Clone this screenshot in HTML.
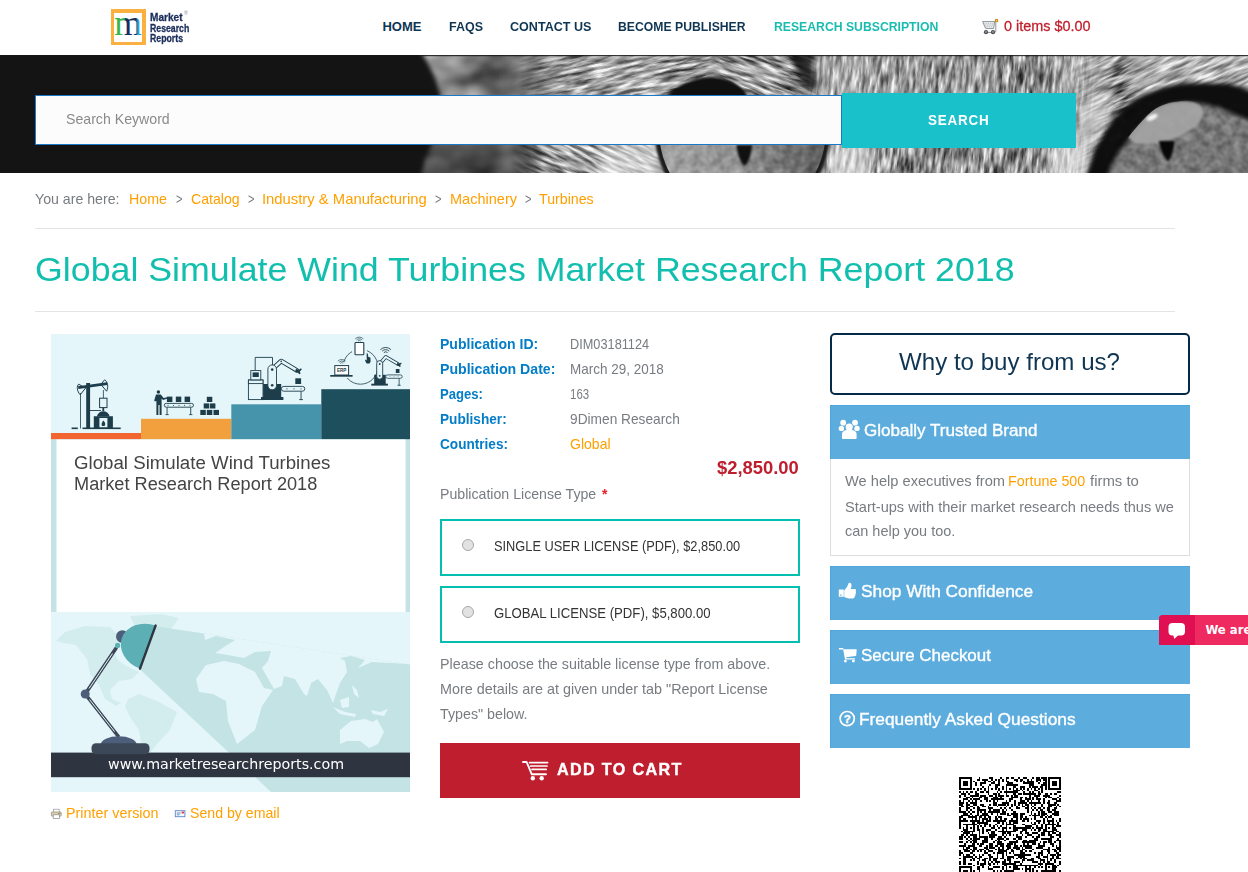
<!DOCTYPE html>
<html lang="en"><head><meta charset="utf-8"><title>Global Simulate Wind Turbines Market Research Report 2018</title>
<style>
html,body{margin:0;padding:0;background:#fff;}
body{width:1248px;height:872px;overflow:hidden;position:relative;font-family:"Liberation Sans",sans-serif;}
.t{position:absolute;white-space:nowrap;transform-origin:0 0;line-height:normal;display:block;margin:0;padding:0;text-decoration:none;font-style:normal;}
.abs{position:absolute;}
#banner{left:0;top:55px;width:1248px;height:118px;background:#141414;overflow:hidden;}
#sbox{left:35px;top:95px;width:805px;height:48px;background:#fcfcfc;border:1px solid #1a78c8;}
#sbtn{left:842px;top:93px;width:234px;height:55px;background:#19c2cb;}
.hr{left:35px;width:1140px;height:1px;background:#e4e4e4;}
.lic{left:440px;width:356px;height:53px;border:2px solid #02bfb0;background:#fff;}
.radio{width:10px;height:10px;border-radius:50%;border:1px solid #a9a9a9;background:#e2e2e2;}
#cart{left:440px;top:743px;width:360px;height:55px;background:#be1e2d;}
#why{left:830px;top:333px;width:356px;height:58px;border:2px solid #052a47;border-radius:5px;background:#fff;}
.ph{left:830px;width:360px;background:#5cacdd;box-shadow:inset 1px 1px 0 #4fa6dc;}
#pb{left:830px;top:459px;width:358px;height:96px;border:1px solid #ddd;border-top:none;background:#fff;}

</style></head><body>
<div class="abs" id="logo" style="left:111px;top:9px;width:35px;height:36px;background:#fbb040;"><div class="abs" style="left:3px;top:4px;width:28px;height:29px;background:#fff"></div></div>
<svg class="abs" id="bannersvg" style="left:0;top:55px" width="1248" height="118" viewBox="0 55 1248 118">
<defs>
<filter id="fBlur" x="0" y="0" width="1" height="1" color-interpolation-filters="sRGB">
  <feTurbulence type="fractalNoise" baseFrequency="0.03 0.045" numOctaves="2" seed="4"/>
  <feColorMatrix type="matrix" values="0.9 0 0 0 0.05  0.9 0 0 0 0.05  0.9 0 0 0 0.05  0 0 0 0 1"/>
</filter>
<filter id="fH" x="0" y="0" width="1" height="1" color-interpolation-filters="sRGB">
  <feTurbulence type="fractalNoise" baseFrequency="0.045 0.30" numOctaves="3" seed="7"/>
  <feColorMatrix type="matrix" values="2.1 0 0 0 -0.55  2.1 0 0 0 -0.55  2.1 0 0 0 -0.55  0 0 0 0 1"/>
</filter>
<filter id="fV" x="0" y="0" width="1" height="1" color-interpolation-filters="sRGB">
  <feTurbulence type="fractalNoise" baseFrequency="0.30 0.05" numOctaves="3" seed="11"/>
  <feColorMatrix type="matrix" values="1.7 0 0 0 -0.35  1.7 0 0 0 -0.35  1.7 0 0 0 -0.35  0 0 0 0 1"/>
</filter>
<filter id="fD" x="0" y="0" width="1" height="1" color-interpolation-filters="sRGB">
  <feTurbulence type="fractalNoise" baseFrequency="0.04 0.28" numOctaves="3" seed="21"/>
  <feColorMatrix type="matrix" values="2.0 0 0 0 -0.5  2.0 0 0 0 -0.5  2.0 0 0 0 -0.5  0 0 0 0 1"/>
</filter>
<filter id="fI" x="0" y="0" width="1" height="1" color-interpolation-filters="sRGB">
  <feTurbulence type="fractalNoise" baseFrequency="0.12 0.12" numOctaves="2" seed="5"/>
  <feColorMatrix type="matrix" values="1.2 0 0 0 -0.1  1.2 0 0 0 -0.1  1.2 0 0 0 -0.1  0 0 0 0 1"/>
</filter>
<filter id="b1" x="-0.2" y="-0.2" width="1.4" height="1.4" color-interpolation-filters="sRGB"><feGaussianBlur stdDeviation="1"/></filter>
<filter id="b2" x="-0.2" y="-0.2" width="1.4" height="1.4" color-interpolation-filters="sRGB"><feGaussianBlur stdDeviation="2"/></filter>
<filter id="b4" x="-0.3" y="-0.3" width="1.6" height="1.6" color-interpolation-filters="sRGB"><feGaussianBlur stdDeviation="4"/></filter>
<filter id="b7" x="-0.1" y="-0.3" width="1.2" height="1.6" color-interpolation-filters="sRGB"><feGaussianBlur stdDeviation="7"/></filter>
<linearGradient id="gm0" x1="0" x2="1"><stop offset="0" stop-color="#fff"/><stop offset="0.6" stop-color="#fff"/><stop offset="1" stop-color="#000"/></linearGradient>
<mask id="mB"><rect x="380" y="55" width="210" height="118" fill="url(#gm0)"/></mask>
<linearGradient id="gm1" x1="0" x2="1"><stop offset="0" stop-color="#000"/><stop offset="0.1" stop-color="#fff"/><stop offset="0.9" stop-color="#fff"/><stop offset="1" stop-color="#000"/></linearGradient>
<mask id="mH"><rect x="510" y="55" width="230" height="50" fill="url(#gm1h)"/></mask>
<mask id="mHb"><rect x="510" y="135" width="160" height="40" fill="url(#gm1h)"/></mask>
<mask id="mH2"><rect x="710" y="55" width="110" height="118" fill="url(#gm1)"/></mask>
<linearGradient id="gm1h" x1="0" x2="1"><stop offset="0" stop-color="#000"/><stop offset="0.28" stop-color="#fff"/><stop offset="0.87" stop-color="#fff"/><stop offset="1" stop-color="#000"/></linearGradient>
<mask id="mV"><rect x="800" y="55" width="310" height="118" fill="url(#gm1)"/></mask>
<linearGradient id="gm3" x1="0" x2="1"><stop offset="0" stop-color="#000"/><stop offset="0.2" stop-color="#fff"/><stop offset="1" stop-color="#fff"/></linearGradient>
<mask id="mD"><rect x="1070" y="55" width="178" height="118" fill="url(#gm3)"/></mask>
<clipPath id="cb"><rect x="0" y="55" width="1248" height="118"/></clipPath>
<clipPath id="cLow"><rect x="600" y="140" width="300" height="40"/></clipPath>
<clipPath id="cIrisR"><path d="M1103,184 C1107,168 1115,151 1126,140 C1134,130 1140,123 1145,118 C1154,108 1163,104 1173,102 C1192,98 1212,102 1227,109 C1236,113 1244,116 1256,121 L1256,184 Z"/></clipPath>
<clipPath id="cEyeL"><circle cx="742.5" cy="133" r="83"/></clipPath>
<linearGradient id="gIris" x1="0" x2="1"><stop offset="0" stop-color="#a2a2a2"/><stop offset="0.45" stop-color="#929292"/><stop offset="0.75" stop-color="#727272"/><stop offset="1" stop-color="#606060"/></linearGradient>
</defs>
<g clip-path="url(#cb)">
<rect x="0" y="55" width="1248" height="118" fill="#808080"/>
<g filter="url(#b7)">
<rect x="400" y="40" width="60" height="60" fill="#8f8f8f"/>
<rect x="460" y="40" width="30" height="60" fill="#808080"/>
<rect x="490" y="40" width="30" height="60" fill="#5e5e5e"/>
<rect x="520" y="40" width="25" height="60" fill="#737373"/>
<rect x="545" y="40" width="55" height="60" fill="#999999"/>
<rect x="600" y="40" width="65" height="60" fill="#a8a8a8"/>
<rect x="665" y="40" width="85" height="60" fill="#8c8c8c"/>
<rect x="750" y="40" width="42" height="60" fill="#999999"/>
<rect x="792" y="40" width="21" height="60" fill="#4c4c4c"/>
<rect x="813" y="40" width="57" height="60" fill="#adadad"/>
<rect x="870" y="40" width="130" height="60" fill="#999999"/>
<rect x="1000" y="40" width="50" height="60" fill="#878787"/>
<rect x="1050" y="40" width="62" height="60" fill="#a8a8a8"/>
<rect x="1112" y="40" width="14" height="60" fill="#6b6b6b"/>
<rect x="1126" y="40" width="134" height="60" fill="#b2b2b2"/>
<rect x="400" y="100" width="145" height="40" fill="#666666"/>
<rect x="545" y="100" width="531" height="40" fill="#999999"/>
<rect x="1076" y="100" width="36" height="40" fill="#c7c7c7"/>
<rect x="1112" y="100" width="148" height="40" fill="#808080"/>
<rect x="400" y="140" width="140" height="50" fill="#4c4c4c"/>
<rect x="540" y="140" width="60" height="50" fill="#a3a3a3"/>
<rect x="600" y="140" width="60" height="50" fill="#d1d1d1"/>
<rect x="660" y="140" width="169" height="50" fill="#8c8c8c"/>
<rect x="829" y="140" width="43" height="50" fill="#d1d1d1"/>
<rect x="872" y="140" width="178" height="50" fill="#8f8f8f"/>
<rect x="1050" y="140" width="42" height="50" fill="#d4d4d4"/>
<rect x="1092" y="140" width="168" height="50" fill="#737373"/>
</g>
<!-- texture overlays -->
<g style="mix-blend-mode:overlay" opacity="0.9">
 <g mask="url(#mB)"><rect x="380" y="55" width="200" height="118" filter="url(#fBlur)"/></g>
 <g mask="url(#mH)"><g transform="rotate(-13 620 110)"><rect x="470" y="0" width="300" height="230" filter="url(#fH)"/></g></g>
 <g mask="url(#mHb)"><g transform="rotate(24 600 160)"><rect x="440" y="40" width="320" height="240" filter="url(#fH)"/></g></g>
 <g mask="url(#mH2)"><g transform="rotate(20 770 80)"><rect x="660" y="-20" width="240" height="240" filter="url(#fH)"/></g></g>
 <g mask="url(#mV)"><g transform="rotate(5 950 110)"><rect x="770" y="20" width="380" height="200" filter="url(#fV)"/></g></g>
 <g mask="url(#mD)"><g transform="rotate(-26 1150 110)"><rect x="980" y="-40" width="380" height="320" filter="url(#fD)"/></g></g>
</g>
<!-- left eye -->
<g>
 <path d="M648,104 C672,76 720,64 770,78 C790,84 805,94 812,102 L812,96 C800,84 785,74 768,70 C720,58 672,70 648,98 Z" fill="#dcdcdc" opacity="0.4" filter="url(#b2)"/>
 <g clip-path="url(#cLow)">
  <circle cx="742.5" cy="133" r="87.5" fill="#1c1c1c" filter="url(#b1)"/>
  <circle cx="742.5" cy="133" r="83" fill="url(#gIris)"/>
  <g clip-path="url(#cEyeL)" style="mix-blend-mode:overlay" opacity="0.3"><rect x="655" y="140" width="180" height="40" filter="url(#fI)"/></g>
 </g>
 <path d="M664,100 C672,88 690,78 710,77.5 C728,77.5 742,84 750,100 Z" fill="#101010" filter="url(#b1)"/>
 <path d="M736.5,145 L752,145 C751.5,155 748.5,162 744.5,166 C740.5,162 737,154 736.5,145 Z" fill="#0a0a0a" filter="url(#b1)" opacity="0.95"/>
 <path d="M792,50 C794,66 800,80 812,90 L818,84 C812,76 810,62 812,50 Z" fill="#1e1e1e" opacity="0.8" filter="url(#b2)"/>
</g>
<!-- right eye -->
<g>
 <path d="M1084,184 C1088,168 1093,154 1100,141 C1104,132 1108,126 1113,119 C1118,112 1124,107 1130,103 C1137,98 1144,94.5 1152,91.5 C1160,88.5 1166,86.5 1173,85 C1181,83.5 1188,83 1195,83 C1206,82.5 1217,82.5 1227,83.5 C1236,85 1243,88 1256,93 L1256,184 Z" fill="#0e0e0e" filter="url(#b2)"/>
 <path id="irisR" d="M1105,184 C1109,168 1117,152 1128,141 C1136,131 1142,124 1147,119 C1156,110 1164,106 1173,104 C1192,100 1212,104 1227,111 C1236,115 1244,118 1256,123 L1256,184 Z" fill="#767676" filter="url(#b2)"/>
 <g style="mix-blend-mode:overlay" opacity="0.3"><path d="M1105,184 C1109,168 1117,152 1128,141 C1136,131 1142,124 1147,119 C1156,110 1164,106 1173,104 C1192,100 1212,104 1227,111 C1236,115 1244,118 1256,123 L1256,184 Z" filter="url(#fI)"/></g>
 <g clip-path="url(#cIrisR)"><ellipse cx="1165" cy="122.5" rx="40" ry="18" fill="#a6a6a6" transform="rotate(-19 1165 122.5)" filter="url(#b1)" opacity="0.9"/></g>
 <ellipse cx="1152" cy="117.3" rx="6" ry="2.6" fill="#f4f4f4" transform="rotate(-25 1152 117.3)" filter="url(#b1)"/>
 <path d="M1159,141 L1174.5,141 C1174,150 1171,158 1168,161.5 C1163,156 1160,149 1159,141 Z" fill="#080808" filter="url(#b1)"/>
</g>
<!-- left darkness with curved cheek edge -->
<path d="M-20,35 H412 L423,55 C432,70 439,85 441,100 C442,120 436,140 425,158 L422,173 L418,195 H-20 Z" fill="#141414" filter="url(#b2)"/>
<rect x="0" y="55" width="400" height="118" fill="#141414"/>
<rect x="420" y="55" width="828" height="1.2" fill="#181818" opacity="0.85"/>
</g>
</svg>

<div class="abs" id="sbox"></div>
<div class="abs" id="sbtn"></div>
<div class="abs hr" style="top:228px"></div>
<div class="abs hr" style="top:311px"></div>
<svg class="abs" id="cover" style="left:51px;top:334px" width="359" height="458" viewBox="51 334 359 458">
<defs>
<clipPath id="beamclip"><polygon points="154,626 410,664.5 410,792 271,792 139.5,669"/></clipPath>
</defs>
<rect x="51" y="334" width="359" height="458" fill="#e5f6fa"/>
<!-- colour steps -->
<rect x="51" y="433" width="90" height="6.5" fill="#f26531"/>
<rect x="141" y="418.8" width="90.3" height="20.7" fill="#f29f3e"/>
<rect x="231.3" y="404.3" width="90" height="35.2" fill="#4693ac"/>
<rect x="321.3" y="389.2" width="88.7" height="50.3" fill="#1e4f5c"/>
<!-- white title panel -->
<rect x="51" y="439.5" width="359" height="172.5" fill="#c5e3e6"/>
<rect x="56.5" y="439.5" width="349" height="172.5" fill="#ffffff"/>
<!-- world map -->
<g fill="#d3edef">
<path d="M56,641 L65,632 L85,626 L110,627 L121,638 L112,650 L119,661 L128,667 L139,672 L132,679 L119,681 L110,690 L112,699 L121,703 L116,706 L105,699 L99,685 L90,674 L87,659 L76,645 L63,643 Z"/>
<path d="M128,699 L139,694 L157,701 L177,712 L170,730 L157,744 L150,753 L143,753 L139,730 L130,717 L125,706 Z"/>
<path d="M130,616 L161,614 L179,618 L170,630 L157,638 L148,632 L134,625 Z"/>
</g>
<polygon points="154,626 410,664.5 410,792 271,792 139.5,669" fill="#c3e3e4"/>
<g fill="#e5f6fa" clip-path="url(#beamclip)">
<!-- Africa -->
<path d="M196,679 L206,665 L224,661 L239,664 L255,672 L264,688 L273,690 L262,706 L255,730 L237,744 L228,721 L226,701 L213,694 L199,692 Z"/>
<!-- Eurasia -->
<path d="M205,640 L216,636 L235,640 L224,647 L215,653 L228,655 L244,658 L255,652 L271,651 L268,661 L262,668 L266,675 L274,689 L282,686 L284,676 L295,679 L304,694 L307,696 L311,683 L318,679 L327,690 L333,703 L336,694 L340,683 L347,672 L345,661 L340,658 L351,656 L365,660 L358,668 L372,662 L410,664 L410,600 L200,600 Z"/>
<!-- SE Asia islands -->
<path d="M333,707 L345,712 L356,714 L355,717 L340,714 Z"/>
<path d="M340,700 L349,697 L349,707 L342,708 Z"/>
<path d="M352,685 L357,690 L359,698 L354,694 Z"/>
<path d="M371,710 L380,712 L388,709 L384,716 L373,714 Z"/>
<!-- Australia -->
<path d="M340,730 L351,721 L365,719 L373,722 L377,719 L384,732 L378,744 L369,748 L360,741 L347,741 L340,744 Z"/>
</g>
<!-- dark footer band -->
<rect x="51" y="752.6" width="359" height="24.6" fill="#2e3440"/>
<!-- lamp -->
<g>
<path d="M116.5,647.5 L85.2,694 L118.8,737" fill="none" stroke="#3c4858" stroke-width="3.6" stroke-linejoin="round"/>
<path d="M112.5,653.5 L89,688.5 M89.5,699.5 L114.5,731.5" fill="none" stroke="#e5f6fa" stroke-width="1"/>
<circle cx="85.2" cy="694" r="4.5" fill="#4d5e7b"/>
<circle cx="122.3" cy="636.5" r="6.3" fill="#4d5e7b"/>
<circle cx="117.6" cy="645.4" r="2.6" fill="#5cb0b5"/>
<path d="M155.6,625.6 A22.9,27.5 109.9 0 0 140,668.7 Z" fill="#5cb0b5"/>
<path d="M155.6,625.6 L140,668.7" stroke="#2e3440" stroke-width="2.4" stroke-linecap="round"/>
<ellipse cx="118.7" cy="744.5" rx="18" ry="8.3" fill="#4d5e7b"/>
<rect x="91.5" y="743.3" width="58" height="11" rx="4.5" fill="#3c4858"/>
</g>
<!-- industrial icons -->
<g fill="#1e3d4a" stroke="none">
<!-- pumpjack -->
<rect x="86.2" y="383" width="3.9" height="45.6"/>
<rect x="82.5" y="427.5" width="38.2" height="1.6"/>
<rect x="71.6" y="427.5" width="6.2" height="1.6"/>
<rect x="80" y="393" width="0.8" height="35.5"/>
<path d="M78,386.2 L107,382.2 L107.4,385 L78.4,389 Z"/>
<path d="M78.6,384.2 C76.6,386 76.8,391 80.2,394.8 L85.6,388 Z" fill="none" stroke="#1e3d4a" stroke-width="1"/>
<path d="M104.6,379.8 C107.8,381.6 108.6,387 106.6,391.2 L100.8,384.4 Z" fill="none" stroke="#1e3d4a" stroke-width="1"/>
<rect x="102.9" y="390" width="0.8" height="8.2"/>
<rect x="99.6" y="398.2" width="7.4" height="9.4" fill="#e5f6fa" stroke="#1e3d4a" stroke-width="1"/>
<rect x="102.4" y="407.6" width="1.8" height="3.5"/>
<rect x="90" y="410.1" width="11" height="0.9"/>
<path d="M96.8,416.6 C98.5,409.5 108,409.5 109.7,416.6 Z"/>
<path d="M93.8,416.2 H112.9 V428 H93.8 Z M99.4,418 V427.6 H107.4 V418 Z" fill-rule="evenodd"/>
<path d="M103.4,420.4 C105.4,422.4 105.8,424.4 104.6,426 H102.2 C101,424.6 101.6,422.6 103.4,420.4 Z"/>
<!-- worker -->
<circle cx="158.4" cy="391.9" r="1.75"/>
<path d="M156,394.4 H160.8 L163.6,398 L167.4,397.2 L167.8,398.6 L163,400 L161.6,398.6 V415 H159.6 V405 H158.4 V415 H156.4 V401 L155,401.4 L154.2,400.6 Z"/>
<rect x="166.9" y="396.6" width="5.5" height="5.4"/><rect x="175.8" y="396.6" width="5.5" height="5.4"/><rect x="184.6" y="396.6" width="5.5" height="5.4"/>
<rect x="164.3" y="403.4" width="29.2" height="3.8" rx="1.9" fill="#e5f6fa" stroke="#1e3d4a" stroke-width="0.9"/>
<circle cx="168" cy="405.3" r="0.55"/><circle cx="173.5" cy="405.3" r="0.55"/><circle cx="179" cy="405.3" r="0.55"/><circle cx="184.5" cy="405.3" r="0.55"/><circle cx="190" cy="405.3" r="0.55"/>
<rect x="166.6" y="407.4" width="0.9" height="7.6"/><rect x="190.3" y="407.4" width="0.9" height="7.6"/>
<rect x="165.4" y="414.3" width="3.3" height="0.8"/><rect x="189.1" y="414.3" width="3.3" height="0.8"/>
<!-- box pyramid -->
<rect x="206.8" y="396.8" width="5.5" height="5.2"/>
<rect x="203.7" y="403.4" width="5.5" height="5.1"/><rect x="209.9" y="403.4" width="5.5" height="5.1"/>
<rect x="200.3" y="409.9" width="5.5" height="5.1"/><rect x="206.8" y="409.9" width="5.5" height="5.1"/><rect x="213.5" y="409.9" width="5.5" height="5.1"/>
</g>
<!-- robot cell on blue step -->
<g fill="#1e3d4a">
<path d="M255.2,370.4 V357.4 H272.5 V366" fill="none" stroke="#1e3d4a" stroke-width="0.9"/>
<rect x="248.4" y="380" width="14.6" height="19.6" fill="#e5f6fa" stroke="#1e3d4a" stroke-width="0.9"/>
<rect x="248.4" y="380" width="14.6" height="3.6" fill="#e5f6fa" stroke="#1e3d4a" stroke-width="0.9"/>
<rect x="250.8" y="370.6" width="10" height="9.3" fill="#e5f6fa" stroke="#1e3d4a" stroke-width="0.9"/>
<rect x="252.6" y="372.4" width="6.2" height="4.6"/>
<rect x="263.1" y="384" width="18.1" height="14"/>
<rect x="261" y="397" width="22.4" height="3"/>
<path d="M272.2,369.2 L281.2,361 L297,370.4" fill="none" stroke="#1e3d4a" stroke-width="4.6" stroke-linecap="round" stroke-linejoin="round"/>
<path d="M272.2,369.2 L281.2,361 L297,370.4" fill="none" stroke="#e5f6fa" stroke-width="2.8" stroke-linecap="round" stroke-linejoin="round"/>
<rect x="267.9" y="364.9" width="8.6" height="24.9" rx="4.3" fill="#e5f6fa" stroke="#1e3d4a" stroke-width="0.9"/>
<circle cx="272.2" cy="369.6" r="1.3"/><circle cx="272.2" cy="385.2" r="1.3"/><circle cx="281.2" cy="361.4" r="0.8"/>
<path d="M296,368.4 L298.6,370 L301,368.2 L301.8,369.4 L299.8,371.4 L300.6,373.6 L299.2,374.2 L297.6,372.2 L295,372 Z"/>
<rect x="295.3" y="378.3" width="5.8" height="5.7"/>
<rect x="281.4" y="386.4" width="23.4" height="4.8" rx="2.4" fill="#e5f6fa" stroke="#1e3d4a" stroke-width="0.9"/>
<circle cx="287" cy="388.8" r="0.6"/><circle cx="294" cy="388.8" r="0.6"/><circle cx="301" cy="388.8" r="0.6"/>
<rect x="300.6" y="391.4" width="0.9" height="8.6"/><rect x="299.2" y="399.2" width="3.7" height="0.9"/>
</g>
<!-- IoT cell on dark step -->
<g fill="#1e3d4a">
<circle cx="360.5" cy="366.8" r="17.4" fill="none" stroke="#1e3d4a" stroke-width="0.8"/>
<rect x="352" y="340" width="15" height="16" fill="#e5f6fa" stroke="none"/>
<rect x="355" y="342.5" width="8.8" height="12.2" rx="0.8" fill="#ffffff" stroke="#1e3d4a" stroke-width="1.1"/>
<g transform="translate(359.3 340.8) scale(0.75)"><g fill="none" stroke="#1e3d4a" stroke-width="0.9" stroke-linecap="round"><path d="M-1.6,0 A2.2,2.2 0 0 1 1.6,0"/><path d="M-3.3,-1.5 A4.6,4.6 0 0 1 3.3,-1.5"/><path d="M-5,-3 A7,7 0 0 1 5,-3"/></g></g>
<path d="M366.6,353.4 L367.6,353.2 L368.4,357 L370.4,357.4 L370.6,361.6 L369.6,363.4 H366.6 L365,360.6 L365.6,359.6 L366.8,360.4 Z"/>
<rect x="331" y="362" width="21" height="16" fill="#e5f6fa" stroke="none"/>
<rect x="334.8" y="365.6" width="13.8" height="9.4" fill="#ffffff" stroke="#1e3d4a" stroke-width="1"/>
<rect x="330.2" y="375" width="22.4" height="1.7"/>
<text x="341.7" y="372.4" font-family="'Liberation Sans',sans-serif" font-size="4.6" font-weight="700" text-anchor="middle" fill="#1e3d4a">ERP</text>
<g transform="translate(341.7 363) scale(0.72)"><g fill="none" stroke="#1e3d4a" stroke-width="0.9" stroke-linecap="round"><path d="M-1.6,0 A2.2,2.2 0 0 1 1.6,0"/><path d="M-3.3,-1.5 A4.6,4.6 0 0 1 3.3,-1.5"/><path d="M-5,-3 A7,7 0 0 1 5,-3"/></g></g>
<rect x="370" y="356" width="34" height="30" fill="#e5f6fa" stroke="none" opacity="0"/>
<rect x="374.2" y="374.8" width="11.5" height="9.4"/>
<rect x="371.3" y="383.7" width="16.6" height="1.9"/>
<path d="M379.7,364 L385.7,356.8 L398,364" fill="none" stroke="#1e3d4a" stroke-width="3.6" stroke-linecap="round" stroke-linejoin="round"/>
<path d="M379.7,364 L385.7,356.8 L398,364" fill="none" stroke="#e5f6fa" stroke-width="2" stroke-linecap="round" stroke-linejoin="round"/>
<rect x="376.7" y="360.6" width="6" height="18.6" rx="3" fill="#e5f6fa" stroke="#1e3d4a" stroke-width="0.9"/>
<circle cx="379.7" cy="364" r="0.9"/><circle cx="379.7" cy="375.8" r="0.9"/>
<path d="M397.4,362.4 L399.4,363.8 L401,362.6 L401.6,363.6 L400.2,365 L400.8,366.6 L399.6,367 L398.4,365.6 L396.6,365.4 Z"/>
<rect x="395.8" y="369" width="3.7" height="4"/>
<rect x="385.8" y="374.9" width="16.4" height="3.4" rx="1.7" fill="#e5f6fa" stroke="#1e3d4a" stroke-width="0.8"/>
<circle cx="390" cy="376.6" r="0.45"/><circle cx="394" cy="376.6" r="0.45"/><circle cx="398" cy="376.6" r="0.45"/>
<rect x="398.7" y="378.4" width="0.8" height="7.2"/><rect x="397.5" y="384.8" width="3.2" height="0.8"/>
<g transform="translate(385.7 352.4) scale(1.0)"><g fill="none" stroke="#1e3d4a" stroke-width="0.9" stroke-linecap="round"><path d="M-1.6,0 A2.2,2.2 0 0 1 1.6,0"/><path d="M-3.3,-1.5 A4.6,4.6 0 0 1 3.3,-1.5"/><path d="M-5,-3 A7,7 0 0 1 5,-3"/></g></g>
</g>
</svg>

<div class="abs lic" style="top:519px"><div class="abs radio" style="left:20px;top:18px"></div></div>
<div class="abs lic" style="top:586px"><div class="abs radio" style="left:20px;top:18px"></div></div>
<div class="abs" id="cart"></div>
<div class="abs" id="why"></div>
<div class="abs ph" style="top:405px;height:54px"></div>
<div class="abs" id="pb"></div>
<div class="abs ph" style="top:566px;height:54px"></div>
<div class="abs ph" style="top:630px;height:54px"></div>
<div class="abs ph" style="top:694px;height:54px"></div>
<div class="abs" id="chat" style="left:1159px;top:615px;width:89px;height:30px;background:#ee2a60;border-radius:4px 0 0 0;"><div class="abs" style="left:0;top:0;width:36px;height:30px;background:#e00f52;border-radius:4px 0 0 0"></div></div>
<svg class="abs" id="qr" style="left:958.9px;top:776.6px" width="102.0" height="102.0" viewBox="0 0 102.0 102.0" shape-rendering="crispEdges"><rect width="102.0" height="102.0" fill="#fff"/><path fill="#000" d="M0.00,0.00h12.53v1.79h-12.53zM19.68,0.00h1.79v1.79h-1.79zM30.42,0.00h3.58v1.79h-3.58zM41.16,0.00h1.79v1.79h-1.79zM46.53,0.00h3.58v1.79h-3.58zM51.89,0.00h3.58v1.79h-3.58zM59.05,0.00h1.79v1.79h-1.79zM64.42,0.00h3.58v1.79h-3.58zM73.37,0.00h1.79v1.79h-1.79zM76.95,0.00h3.58v1.79h-3.58zM82.32,0.00h5.37v1.79h-5.37zM89.47,0.00h12.53v1.79h-12.53zM0.00,1.79h1.79v1.79h-1.79zM10.74,1.79h1.79v1.79h-1.79zM17.89,1.79h3.58v1.79h-3.58zM23.26,1.79h5.37v1.79h-5.37zM32.21,1.79h1.79v1.79h-1.79zM35.79,1.79h1.79v1.79h-1.79zM39.37,1.79h1.79v1.79h-1.79zM42.95,1.79h1.79v1.79h-1.79zM46.53,1.79h1.79v1.79h-1.79zM55.47,1.79h3.58v1.79h-3.58zM60.84,1.79h3.58v1.79h-3.58zM68.00,1.79h1.79v1.79h-1.79zM71.58,1.79h1.79v1.79h-1.79zM76.95,1.79h5.37v1.79h-5.37zM84.11,1.79h3.58v1.79h-3.58zM89.47,1.79h1.79v1.79h-1.79zM100.21,1.79h1.79v1.79h-1.79zM0.00,3.58h1.79v1.79h-1.79zM3.58,3.58h5.37v1.79h-5.37zM10.74,3.58h1.79v1.79h-1.79zM14.32,3.58h1.79v1.79h-1.79zM25.05,3.58h1.79v1.79h-1.79zM28.63,3.58h3.58v1.79h-3.58zM34.00,3.58h1.79v1.79h-1.79zM39.37,3.58h1.79v1.79h-1.79zM42.95,3.58h1.79v1.79h-1.79zM46.53,3.58h3.58v1.79h-3.58zM57.26,3.58h1.79v1.79h-1.79zM60.84,3.58h1.79v1.79h-1.79zM64.42,3.58h1.79v1.79h-1.79zM68.00,3.58h7.16v1.79h-7.16zM76.95,3.58h1.79v1.79h-1.79zM80.53,3.58h1.79v1.79h-1.79zM85.89,3.58h1.79v1.79h-1.79zM89.47,3.58h1.79v1.79h-1.79zM93.05,3.58h5.37v1.79h-5.37zM100.21,3.58h1.79v1.79h-1.79zM0.00,5.37h1.79v1.79h-1.79zM3.58,5.37h5.37v1.79h-5.37zM10.74,5.37h1.79v1.79h-1.79zM16.11,5.37h1.79v1.79h-1.79zM21.47,5.37h5.37v1.79h-5.37zM32.21,5.37h3.58v1.79h-3.58zM39.37,5.37h1.79v1.79h-1.79zM48.32,5.37h5.37v1.79h-5.37zM64.42,5.37h10.74v1.79h-10.74zM78.74,5.37h1.79v1.79h-1.79zM84.11,5.37h3.58v1.79h-3.58zM89.47,5.37h1.79v1.79h-1.79zM93.05,5.37h5.37v1.79h-5.37zM100.21,5.37h1.79v1.79h-1.79zM0.00,7.16h1.79v1.79h-1.79zM3.58,7.16h5.37v1.79h-5.37zM10.74,7.16h1.79v1.79h-1.79zM16.11,7.16h1.79v1.79h-1.79zM21.47,7.16h1.79v1.79h-1.79zM30.42,7.16h1.79v1.79h-1.79zM35.79,7.16h5.37v1.79h-5.37zM46.53,7.16h12.53v1.79h-12.53zM69.79,7.16h5.37v1.79h-5.37zM82.32,7.16h5.37v1.79h-5.37zM89.47,7.16h1.79v1.79h-1.79zM93.05,7.16h5.37v1.79h-5.37zM100.21,7.16h1.79v1.79h-1.79zM0.00,8.95h1.79v1.79h-1.79zM10.74,8.95h1.79v1.79h-1.79zM23.26,8.95h1.79v1.79h-1.79zM28.63,8.95h1.79v1.79h-1.79zM35.79,8.95h3.58v1.79h-3.58zM42.95,8.95h1.79v1.79h-1.79zM46.53,8.95h1.79v1.79h-1.79zM53.68,8.95h3.58v1.79h-3.58zM60.84,8.95h5.37v1.79h-5.37zM69.79,8.95h1.79v1.79h-1.79zM73.37,8.95h5.37v1.79h-5.37zM80.53,8.95h3.58v1.79h-3.58zM85.89,8.95h1.79v1.79h-1.79zM89.47,8.95h1.79v1.79h-1.79zM100.21,8.95h1.79v1.79h-1.79zM0.00,10.74h12.53v1.79h-12.53zM14.32,10.74h1.79v1.79h-1.79zM17.89,10.74h1.79v1.79h-1.79zM21.47,10.74h1.79v1.79h-1.79zM25.05,10.74h1.79v1.79h-1.79zM28.63,10.74h1.79v1.79h-1.79zM32.21,10.74h1.79v1.79h-1.79zM35.79,10.74h1.79v1.79h-1.79zM39.37,10.74h1.79v1.79h-1.79zM42.95,10.74h1.79v1.79h-1.79zM46.53,10.74h1.79v1.79h-1.79zM50.11,10.74h1.79v1.79h-1.79zM53.68,10.74h1.79v1.79h-1.79zM57.26,10.74h1.79v1.79h-1.79zM60.84,10.74h1.79v1.79h-1.79zM64.42,10.74h1.79v1.79h-1.79zM68.00,10.74h1.79v1.79h-1.79zM71.58,10.74h1.79v1.79h-1.79zM75.16,10.74h1.79v1.79h-1.79zM78.74,10.74h1.79v1.79h-1.79zM82.32,10.74h1.79v1.79h-1.79zM85.89,10.74h1.79v1.79h-1.79zM89.47,10.74h12.53v1.79h-12.53zM17.89,12.53h1.79v1.79h-1.79zM25.05,12.53h1.79v1.79h-1.79zM28.63,12.53h1.79v1.79h-1.79zM39.37,12.53h1.79v1.79h-1.79zM46.53,12.53h1.79v1.79h-1.79zM53.68,12.53h7.16v1.79h-7.16zM62.63,12.53h1.79v1.79h-1.79zM68.00,12.53h1.79v1.79h-1.79zM75.16,12.53h3.58v1.79h-3.58zM82.32,12.53h1.79v1.79h-1.79zM0.00,14.32h1.79v1.79h-1.79zM3.58,14.32h1.79v1.79h-1.79zM7.16,14.32h1.79v1.79h-1.79zM10.74,14.32h3.58v1.79h-3.58zM16.11,14.32h1.79v1.79h-1.79zM21.47,14.32h3.58v1.79h-3.58zM26.84,14.32h3.58v1.79h-3.58zM37.58,14.32h1.79v1.79h-1.79zM41.16,14.32h1.79v1.79h-1.79zM44.74,14.32h14.32v1.79h-14.32zM64.42,14.32h1.79v1.79h-1.79zM69.79,14.32h1.79v1.79h-1.79zM73.37,14.32h1.79v1.79h-1.79zM78.74,14.32h1.79v1.79h-1.79zM82.32,14.32h1.79v1.79h-1.79zM98.42,14.32h3.58v1.79h-3.58zM1.79,16.11h5.37v1.79h-5.37zM8.95,16.11h1.79v1.79h-1.79zM16.11,16.11h3.58v1.79h-3.58zM28.63,16.11h1.79v1.79h-1.79zM34.00,16.11h3.58v1.79h-3.58zM39.37,16.11h1.79v1.79h-1.79zM46.53,16.11h1.79v1.79h-1.79zM53.68,16.11h3.58v1.79h-3.58zM59.05,16.11h3.58v1.79h-3.58zM64.42,16.11h12.53v1.79h-12.53zM78.74,16.11h3.58v1.79h-3.58zM85.89,16.11h3.58v1.79h-3.58zM91.26,16.11h1.79v1.79h-1.79zM94.84,16.11h3.58v1.79h-3.58zM0.00,17.89h1.79v1.79h-1.79zM5.37,17.89h1.79v1.79h-1.79zM10.74,17.89h8.95v1.79h-8.95zM21.47,17.89h5.37v1.79h-5.37zM30.42,17.89h3.58v1.79h-3.58zM35.79,17.89h1.79v1.79h-1.79zM39.37,17.89h5.37v1.79h-5.37zM46.53,17.89h3.58v1.79h-3.58zM51.89,17.89h1.79v1.79h-1.79zM55.47,17.89h3.58v1.79h-3.58zM69.79,17.89h1.79v1.79h-1.79zM75.16,17.89h5.37v1.79h-5.37zM84.11,17.89h7.16v1.79h-7.16zM100.21,17.89h1.79v1.79h-1.79zM0.00,19.68h1.79v1.79h-1.79zM7.16,19.68h3.58v1.79h-3.58zM12.53,19.68h1.79v1.79h-1.79zM19.68,19.68h3.58v1.79h-3.58zM25.05,19.68h3.58v1.79h-3.58zM34.00,19.68h5.37v1.79h-5.37zM41.16,19.68h1.79v1.79h-1.79zM51.89,19.68h7.16v1.79h-7.16zM60.84,19.68h3.58v1.79h-3.58zM66.21,19.68h1.79v1.79h-1.79zM69.79,19.68h1.79v1.79h-1.79zM73.37,19.68h1.79v1.79h-1.79zM76.95,19.68h1.79v1.79h-1.79zM85.89,19.68h1.79v1.79h-1.79zM89.47,19.68h3.58v1.79h-3.58zM98.42,19.68h1.79v1.79h-1.79zM3.58,21.47h5.37v1.79h-5.37zM10.74,21.47h1.79v1.79h-1.79zM14.32,21.47h7.16v1.79h-7.16zM25.05,21.47h3.58v1.79h-3.58zM32.21,21.47h12.53v1.79h-12.53zM50.11,21.47h3.58v1.79h-3.58zM60.84,21.47h1.79v1.79h-1.79zM66.21,21.47h5.37v1.79h-5.37zM73.37,21.47h1.79v1.79h-1.79zM76.95,21.47h5.37v1.79h-5.37zM84.11,21.47h1.79v1.79h-1.79zM93.05,21.47h5.37v1.79h-5.37zM100.21,21.47h1.79v1.79h-1.79zM0.00,23.26h1.79v1.79h-1.79zM3.58,23.26h1.79v1.79h-1.79zM8.95,23.26h1.79v1.79h-1.79zM12.53,23.26h1.79v1.79h-1.79zM16.11,23.26h1.79v1.79h-1.79zM21.47,23.26h1.79v1.79h-1.79zM26.84,23.26h1.79v1.79h-1.79zM30.42,23.26h1.79v1.79h-1.79zM34.00,23.26h1.79v1.79h-1.79zM37.58,23.26h1.79v1.79h-1.79zM46.53,23.26h1.79v1.79h-1.79zM50.11,23.26h1.79v1.79h-1.79zM55.47,23.26h1.79v1.79h-1.79zM60.84,23.26h5.37v1.79h-5.37zM68.00,23.26h1.79v1.79h-1.79zM71.58,23.26h1.79v1.79h-1.79zM78.74,23.26h1.79v1.79h-1.79zM84.11,23.26h1.79v1.79h-1.79zM89.47,23.26h1.79v1.79h-1.79zM96.63,23.26h5.37v1.79h-5.37zM0.00,25.05h5.37v1.79h-5.37zM7.16,25.05h1.79v1.79h-1.79zM10.74,25.05h7.16v1.79h-7.16zM34.00,25.05h3.58v1.79h-3.58zM42.95,25.05h7.16v1.79h-7.16zM55.47,25.05h1.79v1.79h-1.79zM59.05,25.05h8.95v1.79h-8.95zM69.79,25.05h12.53v1.79h-12.53zM84.11,25.05h1.79v1.79h-1.79zM87.68,25.05h3.58v1.79h-3.58zM94.84,25.05h3.58v1.79h-3.58zM0.00,26.84h3.58v1.79h-3.58zM7.16,26.84h3.58v1.79h-3.58zM14.32,26.84h3.58v1.79h-3.58zM21.47,26.84h3.58v1.79h-3.58zM30.42,26.84h1.79v1.79h-1.79zM34.00,26.84h3.58v1.79h-3.58zM39.37,26.84h7.16v1.79h-7.16zM48.32,26.84h1.79v1.79h-1.79zM51.89,26.84h1.79v1.79h-1.79zM55.47,26.84h1.79v1.79h-1.79zM59.05,26.84h1.79v1.79h-1.79zM62.63,26.84h1.79v1.79h-1.79zM66.21,26.84h3.58v1.79h-3.58zM71.58,26.84h1.79v1.79h-1.79zM75.16,26.84h1.79v1.79h-1.79zM82.32,26.84h1.79v1.79h-1.79zM89.47,26.84h7.16v1.79h-7.16zM98.42,26.84h1.79v1.79h-1.79zM1.79,28.63h3.58v1.79h-3.58zM7.16,28.63h1.79v1.79h-1.79zM10.74,28.63h3.58v1.79h-3.58zM17.89,28.63h1.79v1.79h-1.79zM23.26,28.63h3.58v1.79h-3.58zM28.63,28.63h1.79v1.79h-1.79zM37.58,28.63h1.79v1.79h-1.79zM46.53,28.63h1.79v1.79h-1.79zM51.89,28.63h1.79v1.79h-1.79zM57.26,28.63h1.79v1.79h-1.79zM62.63,28.63h3.58v1.79h-3.58zM68.00,28.63h1.79v1.79h-1.79zM73.37,28.63h1.79v1.79h-1.79zM82.32,28.63h1.79v1.79h-1.79zM89.47,28.63h3.58v1.79h-3.58zM96.63,28.63h1.79v1.79h-1.79zM100.21,28.63h1.79v1.79h-1.79zM0.00,30.42h1.79v1.79h-1.79zM7.16,30.42h3.58v1.79h-3.58zM14.32,30.42h1.79v1.79h-1.79zM17.89,30.42h3.58v1.79h-3.58zM28.63,30.42h5.37v1.79h-5.37zM41.16,30.42h1.79v1.79h-1.79zM44.74,30.42h1.79v1.79h-1.79zM50.11,30.42h1.79v1.79h-1.79zM57.26,30.42h3.58v1.79h-3.58zM66.21,30.42h3.58v1.79h-3.58zM71.58,30.42h1.79v1.79h-1.79zM75.16,30.42h1.79v1.79h-1.79zM78.74,30.42h3.58v1.79h-3.58zM84.11,30.42h1.79v1.79h-1.79zM87.68,30.42h3.58v1.79h-3.58zM94.84,30.42h3.58v1.79h-3.58zM0.00,32.21h1.79v1.79h-1.79zM7.16,32.21h1.79v1.79h-1.79zM10.74,32.21h1.79v1.79h-1.79zM17.89,32.21h8.95v1.79h-8.95zM30.42,32.21h1.79v1.79h-1.79zM34.00,32.21h7.16v1.79h-7.16zM42.95,32.21h1.79v1.79h-1.79zM46.53,32.21h1.79v1.79h-1.79zM51.89,32.21h1.79v1.79h-1.79zM68.00,32.21h1.79v1.79h-1.79zM73.37,32.21h1.79v1.79h-1.79zM76.95,32.21h1.79v1.79h-1.79zM80.53,32.21h3.58v1.79h-3.58zM87.68,32.21h3.58v1.79h-3.58zM93.05,32.21h3.58v1.79h-3.58zM0.00,34.00h7.16v1.79h-7.16zM8.95,34.00h1.79v1.79h-1.79zM12.53,34.00h3.58v1.79h-3.58zM17.89,34.00h1.79v1.79h-1.79zM21.47,34.00h1.79v1.79h-1.79zM25.05,34.00h1.79v1.79h-1.79zM28.63,34.00h12.53v1.79h-12.53zM42.95,34.00h3.58v1.79h-3.58zM53.68,34.00h3.58v1.79h-3.58zM68.00,34.00h1.79v1.79h-1.79zM71.58,34.00h1.79v1.79h-1.79zM78.74,34.00h1.79v1.79h-1.79zM82.32,34.00h3.58v1.79h-3.58zM89.47,34.00h3.58v1.79h-3.58zM94.84,34.00h5.37v1.79h-5.37zM3.58,35.79h5.37v1.79h-5.37zM10.74,35.79h1.79v1.79h-1.79zM17.89,35.79h1.79v1.79h-1.79zM23.26,35.79h5.37v1.79h-5.37zM32.21,35.79h1.79v1.79h-1.79zM37.58,35.79h1.79v1.79h-1.79zM41.16,35.79h5.37v1.79h-5.37zM48.32,35.79h1.79v1.79h-1.79zM51.89,35.79h7.16v1.79h-7.16zM60.84,35.79h5.37v1.79h-5.37zM71.58,35.79h1.79v1.79h-1.79zM75.16,35.79h1.79v1.79h-1.79zM78.74,35.79h1.79v1.79h-1.79zM82.32,35.79h5.37v1.79h-5.37zM93.05,35.79h7.16v1.79h-7.16zM1.79,37.58h8.95v1.79h-8.95zM12.53,37.58h1.79v1.79h-1.79zM16.11,37.58h3.58v1.79h-3.58zM21.47,37.58h8.95v1.79h-8.95zM37.58,37.58h1.79v1.79h-1.79zM48.32,37.58h3.58v1.79h-3.58zM53.68,37.58h5.37v1.79h-5.37zM60.84,37.58h3.58v1.79h-3.58zM69.79,37.58h1.79v1.79h-1.79zM73.37,37.58h7.16v1.79h-7.16zM82.32,37.58h3.58v1.79h-3.58zM87.68,37.58h1.79v1.79h-1.79zM91.26,37.58h1.79v1.79h-1.79zM94.84,37.58h5.37v1.79h-5.37zM0.00,39.37h3.58v1.79h-3.58zM8.95,39.37h8.95v1.79h-8.95zM19.68,39.37h3.58v1.79h-3.58zM25.05,39.37h1.79v1.79h-1.79zM28.63,39.37h3.58v1.79h-3.58zM35.79,39.37h1.79v1.79h-1.79zM39.37,39.37h3.58v1.79h-3.58zM53.68,39.37h5.37v1.79h-5.37zM60.84,39.37h3.58v1.79h-3.58zM66.21,39.37h1.79v1.79h-1.79zM75.16,39.37h1.79v1.79h-1.79zM80.53,39.37h3.58v1.79h-3.58zM85.89,39.37h1.79v1.79h-1.79zM89.47,39.37h3.58v1.79h-3.58zM0.00,41.16h1.79v1.79h-1.79zM3.58,41.16h3.58v1.79h-3.58zM12.53,41.16h1.79v1.79h-1.79zM16.11,41.16h1.79v1.79h-1.79zM19.68,41.16h1.79v1.79h-1.79zM23.26,41.16h5.37v1.79h-5.37zM30.42,41.16h1.79v1.79h-1.79zM35.79,41.16h3.58v1.79h-3.58zM41.16,41.16h1.79v1.79h-1.79zM44.74,41.16h3.58v1.79h-3.58zM51.89,41.16h1.79v1.79h-1.79zM57.26,41.16h1.79v1.79h-1.79zM60.84,41.16h1.79v1.79h-1.79zM64.42,41.16h5.37v1.79h-5.37zM71.58,41.16h1.79v1.79h-1.79zM75.16,41.16h1.79v1.79h-1.79zM84.11,41.16h1.79v1.79h-1.79zM87.68,41.16h1.79v1.79h-1.79zM93.05,41.16h1.79v1.79h-1.79zM100.21,41.16h1.79v1.79h-1.79zM0.00,42.95h8.95v1.79h-8.95zM10.74,42.95h10.74v1.79h-10.74zM23.26,42.95h1.79v1.79h-1.79zM26.84,42.95h5.37v1.79h-5.37zM34.00,42.95h12.53v1.79h-12.53zM50.11,42.95h8.95v1.79h-8.95zM62.63,42.95h3.58v1.79h-3.58zM68.00,42.95h1.79v1.79h-1.79zM76.95,42.95h5.37v1.79h-5.37zM84.11,42.95h1.79v1.79h-1.79zM87.68,42.95h7.16v1.79h-7.16zM96.63,42.95h1.79v1.79h-1.79zM100.21,42.95h1.79v1.79h-1.79zM0.00,44.74h1.79v1.79h-1.79zM12.53,44.74h3.58v1.79h-3.58zM17.89,44.74h10.74v1.79h-10.74zM37.58,44.74h3.58v1.79h-3.58zM42.95,44.74h1.79v1.79h-1.79zM46.53,44.74h1.79v1.79h-1.79zM50.11,44.74h1.79v1.79h-1.79zM53.68,44.74h5.37v1.79h-5.37zM71.58,44.74h1.79v1.79h-1.79zM75.16,44.74h1.79v1.79h-1.79zM78.74,44.74h1.79v1.79h-1.79zM84.11,44.74h1.79v1.79h-1.79zM89.47,44.74h1.79v1.79h-1.79zM93.05,44.74h1.79v1.79h-1.79zM98.42,44.74h1.79v1.79h-1.79zM0.00,46.53h1.79v1.79h-1.79zM3.58,46.53h14.32v1.79h-14.32zM19.68,46.53h1.79v1.79h-1.79zM25.05,46.53h3.58v1.79h-3.58zM30.42,46.53h1.79v1.79h-1.79zM35.79,46.53h1.79v1.79h-1.79zM42.95,46.53h1.79v1.79h-1.79zM46.53,46.53h8.95v1.79h-8.95zM62.63,46.53h3.58v1.79h-3.58zM73.37,46.53h3.58v1.79h-3.58zM82.32,46.53h1.79v1.79h-1.79zM85.89,46.53h10.74v1.79h-10.74zM98.42,46.53h1.79v1.79h-1.79zM0.00,48.32h1.79v1.79h-1.79zM7.16,48.32h1.79v1.79h-1.79zM14.32,48.32h1.79v1.79h-1.79zM17.89,48.32h1.79v1.79h-1.79zM21.47,48.32h1.79v1.79h-1.79zM25.05,48.32h1.79v1.79h-1.79zM30.42,48.32h1.79v1.79h-1.79zM34.00,48.32h1.79v1.79h-1.79zM37.58,48.32h1.79v1.79h-1.79zM41.16,48.32h1.79v1.79h-1.79zM46.53,48.32h1.79v1.79h-1.79zM53.68,48.32h3.58v1.79h-3.58zM66.21,48.32h7.16v1.79h-7.16zM76.95,48.32h1.79v1.79h-1.79zM82.32,48.32h1.79v1.79h-1.79zM85.89,48.32h1.79v1.79h-1.79zM93.05,48.32h1.79v1.79h-1.79zM96.63,48.32h5.37v1.79h-5.37zM0.00,50.11h1.79v1.79h-1.79zM3.58,50.11h1.79v1.79h-1.79zM7.16,50.11h1.79v1.79h-1.79zM10.74,50.11h1.79v1.79h-1.79zM14.32,50.11h1.79v1.79h-1.79zM17.89,50.11h1.79v1.79h-1.79zM23.26,50.11h1.79v1.79h-1.79zM32.21,50.11h3.58v1.79h-3.58zM39.37,50.11h1.79v1.79h-1.79zM42.95,50.11h5.37v1.79h-5.37zM50.11,50.11h1.79v1.79h-1.79zM53.68,50.11h17.89v1.79h-17.89zM73.37,50.11h1.79v1.79h-1.79zM76.95,50.11h7.16v1.79h-7.16zM85.89,50.11h1.79v1.79h-1.79zM89.47,50.11h1.79v1.79h-1.79zM93.05,50.11h3.58v1.79h-3.58zM3.58,51.89h5.37v1.79h-5.37zM14.32,51.89h1.79v1.79h-1.79zM17.89,51.89h3.58v1.79h-3.58zM23.26,51.89h1.79v1.79h-1.79zM26.84,51.89h5.37v1.79h-5.37zM35.79,51.89h1.79v1.79h-1.79zM42.95,51.89h1.79v1.79h-1.79zM46.53,51.89h1.79v1.79h-1.79zM53.68,51.89h5.37v1.79h-5.37zM62.63,51.89h5.37v1.79h-5.37zM71.58,51.89h1.79v1.79h-1.79zM75.16,51.89h1.79v1.79h-1.79zM78.74,51.89h3.58v1.79h-3.58zM84.11,51.89h3.58v1.79h-3.58zM93.05,51.89h5.37v1.79h-5.37zM1.79,53.68h1.79v1.79h-1.79zM5.37,53.68h10.74v1.79h-10.74zM19.68,53.68h1.79v1.79h-1.79zM23.26,53.68h1.79v1.79h-1.79zM26.84,53.68h1.79v1.79h-1.79zM32.21,53.68h3.58v1.79h-3.58zM39.37,53.68h17.89v1.79h-17.89zM60.84,53.68h3.58v1.79h-3.58zM66.21,53.68h1.79v1.79h-1.79zM78.74,53.68h1.79v1.79h-1.79zM84.11,53.68h10.74v1.79h-10.74zM96.63,53.68h3.58v1.79h-3.58zM3.58,55.47h7.16v1.79h-7.16zM12.53,55.47h1.79v1.79h-1.79zM19.68,55.47h1.79v1.79h-1.79zM23.26,55.47h1.79v1.79h-1.79zM28.63,55.47h1.79v1.79h-1.79zM32.21,55.47h3.58v1.79h-3.58zM42.95,55.47h3.58v1.79h-3.58zM48.32,55.47h3.58v1.79h-3.58zM60.84,55.47h1.79v1.79h-1.79zM66.21,55.47h3.58v1.79h-3.58zM73.37,55.47h5.37v1.79h-5.37zM82.32,55.47h3.58v1.79h-3.58zM89.47,55.47h1.79v1.79h-1.79zM93.05,55.47h3.58v1.79h-3.58zM100.21,55.47h1.79v1.79h-1.79zM1.79,57.26h3.58v1.79h-3.58zM7.16,57.26h1.79v1.79h-1.79zM10.74,57.26h7.16v1.79h-7.16zM19.68,57.26h1.79v1.79h-1.79zM30.42,57.26h7.16v1.79h-7.16zM42.95,57.26h1.79v1.79h-1.79zM46.53,57.26h1.79v1.79h-1.79zM50.11,57.26h1.79v1.79h-1.79zM53.68,57.26h1.79v1.79h-1.79zM57.26,57.26h1.79v1.79h-1.79zM62.63,57.26h1.79v1.79h-1.79zM68.00,57.26h5.37v1.79h-5.37zM78.74,57.26h1.79v1.79h-1.79zM82.32,57.26h3.58v1.79h-3.58zM89.47,57.26h3.58v1.79h-3.58zM96.63,57.26h5.37v1.79h-5.37zM0.00,59.05h3.58v1.79h-3.58zM5.37,59.05h1.79v1.79h-1.79zM8.95,59.05h1.79v1.79h-1.79zM14.32,59.05h3.58v1.79h-3.58zM19.68,59.05h8.95v1.79h-8.95zM30.42,59.05h5.37v1.79h-5.37zM39.37,59.05h3.58v1.79h-3.58zM44.74,59.05h1.79v1.79h-1.79zM57.26,59.05h5.37v1.79h-5.37zM66.21,59.05h1.79v1.79h-1.79zM73.37,59.05h1.79v1.79h-1.79zM76.95,59.05h3.58v1.79h-3.58zM91.26,59.05h3.58v1.79h-3.58zM100.21,59.05h1.79v1.79h-1.79zM0.00,60.84h3.58v1.79h-3.58zM7.16,60.84h1.79v1.79h-1.79zM10.74,60.84h1.79v1.79h-1.79zM14.32,60.84h7.16v1.79h-7.16zM25.05,60.84h3.58v1.79h-3.58zM32.21,60.84h1.79v1.79h-1.79zM37.58,60.84h7.16v1.79h-7.16zM46.53,60.84h3.58v1.79h-3.58zM53.68,60.84h3.58v1.79h-3.58zM59.05,60.84h3.58v1.79h-3.58zM75.16,60.84h3.58v1.79h-3.58zM82.32,60.84h10.74v1.79h-10.74zM98.42,60.84h1.79v1.79h-1.79zM8.95,62.63h1.79v1.79h-1.79zM12.53,62.63h5.37v1.79h-5.37zM23.26,62.63h5.37v1.79h-5.37zM35.79,62.63h1.79v1.79h-1.79zM39.37,62.63h1.79v1.79h-1.79zM44.74,62.63h1.79v1.79h-1.79zM57.26,62.63h1.79v1.79h-1.79zM64.42,62.63h3.58v1.79h-3.58zM69.79,62.63h8.95v1.79h-8.95zM89.47,62.63h3.58v1.79h-3.58zM96.63,62.63h5.37v1.79h-5.37zM0.00,64.42h3.58v1.79h-3.58zM7.16,64.42h1.79v1.79h-1.79zM10.74,64.42h1.79v1.79h-1.79zM14.32,64.42h3.58v1.79h-3.58zM23.26,64.42h5.37v1.79h-5.37zM34.00,64.42h1.79v1.79h-1.79zM37.58,64.42h5.37v1.79h-5.37zM50.11,64.42h8.95v1.79h-8.95zM62.63,64.42h14.32v1.79h-14.32zM80.53,64.42h1.79v1.79h-1.79zM84.11,64.42h3.58v1.79h-3.58zM89.47,64.42h3.58v1.79h-3.58zM94.84,64.42h1.79v1.79h-1.79zM100.21,64.42h1.79v1.79h-1.79zM5.37,66.21h1.79v1.79h-1.79zM12.53,66.21h3.58v1.79h-3.58zM17.89,66.21h1.79v1.79h-1.79zM21.47,66.21h3.58v1.79h-3.58zM30.42,66.21h3.58v1.79h-3.58zM37.58,66.21h7.16v1.79h-7.16zM48.32,66.21h5.37v1.79h-5.37zM55.47,66.21h1.79v1.79h-1.79zM64.42,66.21h1.79v1.79h-1.79zM68.00,66.21h1.79v1.79h-1.79zM73.37,66.21h3.58v1.79h-3.58zM78.74,66.21h1.79v1.79h-1.79zM84.11,66.21h1.79v1.79h-1.79zM91.26,66.21h3.58v1.79h-3.58zM100.21,66.21h1.79v1.79h-1.79zM0.00,68.00h7.16v1.79h-7.16zM8.95,68.00h7.16v1.79h-7.16zM19.68,68.00h3.58v1.79h-3.58zM26.84,68.00h1.79v1.79h-1.79zM30.42,68.00h3.58v1.79h-3.58zM35.79,68.00h3.58v1.79h-3.58zM41.16,68.00h3.58v1.79h-3.58zM46.53,68.00h5.37v1.79h-5.37zM55.47,68.00h3.58v1.79h-3.58zM60.84,68.00h1.79v1.79h-1.79zM64.42,68.00h8.95v1.79h-8.95zM78.74,68.00h7.16v1.79h-7.16zM93.05,68.00h1.79v1.79h-1.79zM96.63,68.00h1.79v1.79h-1.79zM100.21,68.00h1.79v1.79h-1.79zM3.58,69.79h1.79v1.79h-1.79zM7.16,69.79h3.58v1.79h-3.58zM14.32,69.79h3.58v1.79h-3.58zM25.05,69.79h3.58v1.79h-3.58zM30.42,69.79h5.37v1.79h-5.37zM39.37,69.79h1.79v1.79h-1.79zM42.95,69.79h1.79v1.79h-1.79zM48.32,69.79h3.58v1.79h-3.58zM53.68,69.79h7.16v1.79h-7.16zM62.63,69.79h1.79v1.79h-1.79zM66.21,69.79h7.16v1.79h-7.16zM76.95,69.79h7.16v1.79h-7.16zM89.47,69.79h1.79v1.79h-1.79zM96.63,69.79h5.37v1.79h-5.37zM3.58,71.58h5.37v1.79h-5.37zM10.74,71.58h1.79v1.79h-1.79zM14.32,71.58h3.58v1.79h-3.58zM19.68,71.58h5.37v1.79h-5.37zM26.84,71.58h3.58v1.79h-3.58zM35.79,71.58h1.79v1.79h-1.79zM39.37,71.58h5.37v1.79h-5.37zM46.53,71.58h3.58v1.79h-3.58zM51.89,71.58h1.79v1.79h-1.79zM57.26,71.58h3.58v1.79h-3.58zM62.63,71.58h3.58v1.79h-3.58zM73.37,71.58h1.79v1.79h-1.79zM84.11,71.58h7.16v1.79h-7.16zM93.05,71.58h3.58v1.79h-3.58zM98.42,71.58h3.58v1.79h-3.58zM0.00,73.37h1.79v1.79h-1.79zM5.37,73.37h5.37v1.79h-5.37zM12.53,73.37h3.58v1.79h-3.58zM17.89,73.37h1.79v1.79h-1.79zM21.47,73.37h1.79v1.79h-1.79zM25.05,73.37h1.79v1.79h-1.79zM28.63,73.37h5.37v1.79h-5.37zM39.37,73.37h8.95v1.79h-8.95zM51.89,73.37h3.58v1.79h-3.58zM60.84,73.37h3.58v1.79h-3.58zM66.21,73.37h1.79v1.79h-1.79zM69.79,73.37h3.58v1.79h-3.58zM82.32,73.37h1.79v1.79h-1.79zM87.68,73.37h3.58v1.79h-3.58zM94.84,73.37h3.58v1.79h-3.58zM100.21,73.37h1.79v1.79h-1.79zM0.00,75.16h3.58v1.79h-3.58zM10.74,75.16h3.58v1.79h-3.58zM25.05,75.16h3.58v1.79h-3.58zM34.00,75.16h1.79v1.79h-1.79zM37.58,75.16h7.16v1.79h-7.16zM46.53,75.16h1.79v1.79h-1.79zM50.11,75.16h1.79v1.79h-1.79zM53.68,75.16h1.79v1.79h-1.79zM60.84,75.16h5.37v1.79h-5.37zM75.16,75.16h1.79v1.79h-1.79zM78.74,75.16h5.37v1.79h-5.37zM89.47,75.16h1.79v1.79h-1.79zM96.63,75.16h3.58v1.79h-3.58zM0.00,76.95h1.79v1.79h-1.79zM3.58,76.95h1.79v1.79h-1.79zM7.16,76.95h3.58v1.79h-3.58zM14.32,76.95h1.79v1.79h-1.79zM19.68,76.95h1.79v1.79h-1.79zM23.26,76.95h1.79v1.79h-1.79zM28.63,76.95h3.58v1.79h-3.58zM37.58,76.95h1.79v1.79h-1.79zM42.95,76.95h1.79v1.79h-1.79zM46.53,76.95h1.79v1.79h-1.79zM55.47,76.95h16.11v1.79h-16.11zM78.74,76.95h1.79v1.79h-1.79zM82.32,76.95h1.79v1.79h-1.79zM87.68,76.95h1.79v1.79h-1.79zM91.26,76.95h5.37v1.79h-5.37zM98.42,76.95h3.58v1.79h-3.58zM3.58,78.74h10.74v1.79h-10.74zM16.11,78.74h1.79v1.79h-1.79zM19.68,78.74h3.58v1.79h-3.58zM30.42,78.74h3.58v1.79h-3.58zM37.58,78.74h1.79v1.79h-1.79zM42.95,78.74h1.79v1.79h-1.79zM48.32,78.74h7.16v1.79h-7.16zM59.05,78.74h7.16v1.79h-7.16zM76.95,78.74h3.58v1.79h-3.58zM84.11,78.74h5.37v1.79h-5.37zM93.05,78.74h1.79v1.79h-1.79zM96.63,78.74h3.58v1.79h-3.58zM0.00,80.53h1.79v1.79h-1.79zM3.58,80.53h3.58v1.79h-3.58zM12.53,80.53h3.58v1.79h-3.58zM17.89,80.53h3.58v1.79h-3.58zM25.05,80.53h3.58v1.79h-3.58zM30.42,80.53h1.79v1.79h-1.79zM34.00,80.53h5.37v1.79h-5.37zM41.16,80.53h3.58v1.79h-3.58zM48.32,80.53h3.58v1.79h-3.58zM53.68,80.53h1.79v1.79h-1.79zM57.26,80.53h1.79v1.79h-1.79zM60.84,80.53h1.79v1.79h-1.79zM64.42,80.53h3.58v1.79h-3.58zM71.58,80.53h3.58v1.79h-3.58zM78.74,80.53h3.58v1.79h-3.58zM87.68,80.53h1.79v1.79h-1.79zM91.26,80.53h3.58v1.79h-3.58zM96.63,80.53h5.37v1.79h-5.37zM3.58,82.32h3.58v1.79h-3.58zM10.74,82.32h1.79v1.79h-1.79zM14.32,82.32h1.79v1.79h-1.79zM19.68,82.32h1.79v1.79h-1.79zM23.26,82.32h3.58v1.79h-3.58zM30.42,82.32h1.79v1.79h-1.79zM34.00,82.32h3.58v1.79h-3.58zM44.74,82.32h1.79v1.79h-1.79zM48.32,82.32h3.58v1.79h-3.58zM62.63,82.32h3.58v1.79h-3.58zM68.00,82.32h7.16v1.79h-7.16zM80.53,82.32h5.37v1.79h-5.37zM87.68,82.32h1.79v1.79h-1.79zM91.26,82.32h1.79v1.79h-1.79zM94.84,82.32h1.79v1.79h-1.79zM0.00,84.11h1.79v1.79h-1.79zM3.58,84.11h3.58v1.79h-3.58zM17.89,84.11h1.79v1.79h-1.79zM25.05,84.11h1.79v1.79h-1.79zM28.63,84.11h1.79v1.79h-1.79zM32.21,84.11h1.79v1.79h-1.79zM35.79,84.11h5.37v1.79h-5.37zM42.95,84.11h3.58v1.79h-3.58zM50.11,84.11h1.79v1.79h-1.79zM55.47,84.11h5.37v1.79h-5.37zM62.63,84.11h1.79v1.79h-1.79zM73.37,84.11h5.37v1.79h-5.37zM80.53,84.11h1.79v1.79h-1.79zM84.11,84.11h1.79v1.79h-1.79zM87.68,84.11h3.58v1.79h-3.58zM94.84,84.11h1.79v1.79h-1.79zM100.21,84.11h1.79v1.79h-1.79zM0.00,85.89h1.79v1.79h-1.79zM3.58,85.89h3.58v1.79h-3.58zM8.95,85.89h3.58v1.79h-3.58zM17.89,85.89h1.79v1.79h-1.79zM21.47,85.89h5.37v1.79h-5.37zM28.63,85.89h3.58v1.79h-3.58zM34.00,85.89h1.79v1.79h-1.79zM37.58,85.89h1.79v1.79h-1.79zM42.95,85.89h14.32v1.79h-14.32zM60.84,85.89h1.79v1.79h-1.79zM78.74,85.89h5.37v1.79h-5.37zM85.89,85.89h8.95v1.79h-8.95zM100.21,85.89h1.79v1.79h-1.79zM14.32,87.68h1.79v1.79h-1.79zM21.47,87.68h3.58v1.79h-3.58zM30.42,87.68h1.79v1.79h-1.79zM44.74,87.68h3.58v1.79h-3.58zM53.68,87.68h25.05v1.79h-25.05zM80.53,87.68h1.79v1.79h-1.79zM85.89,87.68h1.79v1.79h-1.79zM93.05,87.68h3.58v1.79h-3.58zM98.42,87.68h1.79v1.79h-1.79zM0.00,89.47h12.53v1.79h-12.53zM17.89,89.47h3.58v1.79h-3.58zM23.26,89.47h1.79v1.79h-1.79zM28.63,89.47h1.79v1.79h-1.79zM34.00,89.47h7.16v1.79h-7.16zM42.95,89.47h1.79v1.79h-1.79zM46.53,89.47h1.79v1.79h-1.79zM50.11,89.47h1.79v1.79h-1.79zM53.68,89.47h5.37v1.79h-5.37zM66.21,89.47h1.79v1.79h-1.79zM69.79,89.47h1.79v1.79h-1.79zM75.16,89.47h1.79v1.79h-1.79zM78.74,89.47h1.79v1.79h-1.79zM82.32,89.47h1.79v1.79h-1.79zM85.89,89.47h1.79v1.79h-1.79zM89.47,89.47h1.79v1.79h-1.79zM93.05,89.47h5.37v1.79h-5.37zM0.00,91.26h1.79v1.79h-1.79zM10.74,91.26h1.79v1.79h-1.79zM17.89,91.26h3.58v1.79h-3.58zM28.63,91.26h5.37v1.79h-5.37zM42.95,91.26h1.79v1.79h-1.79zM46.53,91.26h1.79v1.79h-1.79zM53.68,91.26h7.16v1.79h-7.16zM62.63,91.26h1.79v1.79h-1.79zM66.21,91.26h5.37v1.79h-5.37zM73.37,91.26h1.79v1.79h-1.79zM85.89,91.26h1.79v1.79h-1.79zM93.05,91.26h3.58v1.79h-3.58zM0.00,93.05h1.79v1.79h-1.79zM3.58,93.05h5.37v1.79h-5.37zM10.74,93.05h1.79v1.79h-1.79zM14.32,93.05h1.79v1.79h-1.79zM19.68,93.05h1.79v1.79h-1.79zM34.00,93.05h1.79v1.79h-1.79zM37.58,93.05h1.79v1.79h-1.79zM41.16,93.05h1.79v1.79h-1.79zM44.74,93.05h10.74v1.79h-10.74zM66.21,93.05h1.79v1.79h-1.79zM69.79,93.05h1.79v1.79h-1.79zM73.37,93.05h1.79v1.79h-1.79zM76.95,93.05h1.79v1.79h-1.79zM82.32,93.05h14.32v1.79h-14.32zM100.21,93.05h1.79v1.79h-1.79zM0.00,94.84h1.79v1.79h-1.79zM3.58,94.84h5.37v1.79h-5.37zM10.74,94.84h1.79v1.79h-1.79zM19.68,94.84h1.79v1.79h-1.79zM23.26,94.84h3.58v1.79h-3.58zM30.42,94.84h1.79v1.79h-1.79zM34.00,94.84h1.79v1.79h-1.79zM39.37,94.84h1.79v1.79h-1.79zM42.95,94.84h7.16v1.79h-7.16zM53.68,94.84h3.58v1.79h-3.58zM59.05,94.84h1.79v1.79h-1.79zM64.42,94.84h1.79v1.79h-1.79zM68.00,94.84h3.58v1.79h-3.58zM75.16,94.84h1.79v1.79h-1.79zM82.32,94.84h1.79v1.79h-1.79zM87.68,94.84h1.79v1.79h-1.79zM93.05,94.84h3.58v1.79h-3.58zM98.42,94.84h1.79v1.79h-1.79zM0.00,96.63h1.79v1.79h-1.79zM3.58,96.63h5.37v1.79h-5.37zM10.74,96.63h1.79v1.79h-1.79zM14.32,96.63h5.37v1.79h-5.37zM21.47,96.63h5.37v1.79h-5.37zM30.42,96.63h3.58v1.79h-3.58zM37.58,96.63h3.58v1.79h-3.58zM44.74,96.63h3.58v1.79h-3.58zM50.11,96.63h3.58v1.79h-3.58zM57.26,96.63h3.58v1.79h-3.58zM62.63,96.63h5.37v1.79h-5.37zM71.58,96.63h3.58v1.79h-3.58zM80.53,96.63h5.37v1.79h-5.37zM91.26,96.63h1.79v1.79h-1.79zM94.84,96.63h3.58v1.79h-3.58zM0.00,98.42h1.79v1.79h-1.79zM10.74,98.42h1.79v1.79h-1.79zM14.32,98.42h1.79v1.79h-1.79zM17.89,98.42h1.79v1.79h-1.79zM21.47,98.42h7.16v1.79h-7.16zM35.79,98.42h3.58v1.79h-3.58zM42.95,98.42h1.79v1.79h-1.79zM55.47,98.42h1.79v1.79h-1.79zM62.63,98.42h3.58v1.79h-3.58zM68.00,98.42h1.79v1.79h-1.79zM71.58,98.42h1.79v1.79h-1.79zM76.95,98.42h1.79v1.79h-1.79zM80.53,98.42h3.58v1.79h-3.58zM87.68,98.42h1.79v1.79h-1.79zM91.26,98.42h1.79v1.79h-1.79zM0.00,100.21h12.53v1.79h-12.53zM16.11,100.21h1.79v1.79h-1.79zM21.47,100.21h1.79v1.79h-1.79zM25.05,100.21h3.58v1.79h-3.58zM32.21,100.21h1.79v1.79h-1.79zM37.58,100.21h5.37v1.79h-5.37zM44.74,100.21h3.58v1.79h-3.58zM53.68,100.21h7.16v1.79h-7.16zM62.63,100.21h7.16v1.79h-7.16zM71.58,100.21h3.58v1.79h-3.58zM76.95,100.21h1.79v1.79h-1.79zM80.53,100.21h3.58v1.79h-3.58zM87.68,100.21h5.37v1.79h-5.37zM94.84,100.21h7.16v1.79h-7.16z"/></svg>
<svg class="abs" id="icons" style="left:0;top:0" width="1248" height="872" viewBox="0 0 1248 872">
<defs>
<linearGradient id="mgrad" x1="0" x2="1" y1="0" y2="0"><stop offset="0" stop-color="#39b54a"/><stop offset="0.36" stop-color="#39b54a"/><stop offset="0.42" stop-color="#1b2d5b"/><stop offset="0.78" stop-color="#1b2d5b"/><stop offset="0.86" stop-color="#27a4d9"/><stop offset="1" stop-color="#27a4d9"/></linearGradient>
</defs>
<!-- logo m -->
<text x="114.2" y="35.3" font-family="'Liberation Serif',serif" font-size="36.5" textLength="27.6" lengthAdjust="spacingAndGlyphs" fill="url(#mgrad)">m</text>
<!-- nav cart -->
<g>
 <path d="M982.6,21.6 H994.6 L993.6,28.4 H985.6 Z" fill="#eef0f2" stroke="#8d9398" stroke-width="1"/>
 <path d="M984.6,23.6 H993.2 M985,25 H993 M985.6,26.4 H992.8" stroke="#9aa0a6" stroke-width="0.7" stroke-dasharray="0.9 0.9"/>
 <path d="M994.4,21.4 L995.8,20.4 V30.5 C995.8,32 995,32.4 994,32.4 H985" fill="none" stroke="#8d9398" stroke-width="1"/>
 <circle cx="986" cy="32.2" r="2.1" fill="#4a4d52"/><circle cx="993" cy="32.2" r="2.1" fill="#4a4d52"/>
 <circle cx="986" cy="32" r="0.8" fill="#c9ccd0"/><circle cx="993" cy="32" r="0.8" fill="#c9ccd0"/>
 <rect x="995" y="19" width="3.1" height="3.1" fill="#d08a1e"/><rect x="996" y="20" width="1.1" height="1.1" fill="#ffe14d"/>
</g>
<!-- printer -->
<g>
 <rect x="53.4" y="809.2" width="5.8" height="3.2" fill="#fdfdfd" stroke="#9a9a9a" stroke-width="0.7"/>
 <rect x="51.4" y="812" width="9.8" height="4.2" rx="0.8" fill="#d9cfb4" stroke="#8f8a7a" stroke-width="0.7"/>
 <rect x="53.2" y="814.8" width="6.2" height="3.6" fill="#ffffff" stroke="#8a8a8a" stroke-width="0.7"/>
 <rect x="59.2" y="813" width="1" height="1" fill="#e8412e"/><rect x="58" y="813" width="1" height="1" fill="#5bbf4a"/>
</g>
<!-- email -->
<g>
 <rect x="175.3" y="810.7" width="9.6" height="6" fill="#f6f9fd" stroke="#5b86c4" stroke-width="0.9"/>
 <rect x="181.6" y="811.6" width="2.4" height="1.8" fill="#e2373b"/>
 <path d="M176.8,813 H180.6 M176.8,814.8 H179.6" stroke="#4e7fc7" stroke-width="0.9"/>
</g>
<!-- add to cart icon -->
<g fill="none" stroke="#ffffff" stroke-linecap="round" stroke-linejoin="round">
 <path d="M523,762 H526.6 L531.8,774.3 H546" stroke-width="1.9"/>
 <path d="M529.6,762.6 H547.6 M530.6,766 H547 M532,769.4 H546.2" stroke-width="1.7"/>
 <circle cx="532.8" cy="778.3" r="2.2" fill="#ffffff" stroke="none"/><circle cx="541.7" cy="778.3" r="2.2" fill="#ffffff" stroke="none"/>
</g>
<!-- group icon -->
<g fill="#ffffff">
 <circle cx="843.2" cy="422.7" r="2.9"/><circle cx="855" cy="422.7" r="2.9"/>
 <circle cx="841.4" cy="428.4" r="2.7"/><circle cx="857" cy="428.4" r="2.7"/>
 <circle cx="849.2" cy="427" r="4.3" fill="#5cacdd"/>
 <circle cx="849.2" cy="427" r="3.6"/>
 <path d="M842,438.9 V435 C842,429.4 856.6,429.4 856.6,435 V438.9 C856.6,439.6 856,439.9 855.4,439.9 H843.2 C842.6,439.9 842,439.6 842,438.9 Z" transform="translate(0 -1)"/>
</g>
<!-- thumbs up -->
<g fill="#ffffff">
 <path d="M838.8,589.4 H843.7 V596.8 H838.8 Z M840.3,594.4 V595.7 H841.6 V594.4 Z" fill-rule="evenodd"/><rect x="843.7" y="590" width="1.2" height="7" opacity="0.75"/>
 <path d="M844.6,590 C846.6,588 848,585.6 848.4,583.6 C848.8,582.4 851,582.6 851.4,584.4 C851.8,586 851.2,587.8 850.6,589 H854.6 C856.2,589 856.4,591 855.6,591.6 C856.4,592.4 856.2,593.8 855.2,594.2 C855.8,595 855.4,596.2 854.6,596.6 C854.8,597.6 854,598.4 852.8,598.4 H849 C847.4,598.4 846,597.4 844.6,597.2 Z"/>
</g>
<!-- secure checkout cart -->
<g fill="#ffffff">
 <path d="M838.9,648 H842.6 C843.2,648 843.5,648.4 843.6,649.2 H856.2 C856.6,649.2 856.8,649.6 856.7,650 L856.2,655.4 C856.2,655.8 856,656 855.6,656.1 L846.2,657.2 L846.4,658.2 H855 V659.6 H845 L843.2,649.6 H838.9 Z"/>
 <circle cx="845.4" cy="661.1" r="1.45"/><circle cx="853.4" cy="661.1" r="1.45"/>
</g>
<!-- question circle -->
<g>
 <circle cx="847.2" cy="718.6" r="7.1" fill="none" stroke="#ffffff" stroke-width="1.7"/>
 <text x="847.2" y="722.6" font-family="'Liberation Sans',sans-serif" font-size="11.5" font-weight="700" text-anchor="middle" fill="#ffffff" stroke="#ffffff" stroke-width="0.4">?</text>
</g>
<!-- chat bubble -->
<g fill="#ffffff">
 <rect x="1168.5" y="623" width="16.5" height="12.6" rx="4"/>
 <path d="M1173.2,634.6 L1174.2,639 L1179,634.6 Z"/>
</g>
</svg>


<div id="texts">
<a class="t" style="left:382.4px;top:19.03px;font-size:13px;color:#0f3552;font-weight:700;font-family:'Liberation Sans', sans-serif;transform:scaleX(1.0000);">HOME</a>
<a class="t" style="left:449px;top:19.03px;font-size:13px;color:#0f3552;font-weight:700;font-family:'Liberation Sans', sans-serif;transform:scaleX(0.9603);">FAQS</a>
<a class="t" style="left:509.8px;top:19.03px;font-size:13px;color:#0f3552;font-weight:700;font-family:'Liberation Sans', sans-serif;transform:scaleX(0.9660);">CONTACT US</a>
<a class="t" style="left:618.4px;top:19.03px;font-size:13px;color:#0f3552;font-weight:700;font-family:'Liberation Sans', sans-serif;transform:scaleX(0.9396);">BECOME PUBLISHER</a>
<a class="t" style="left:773.7px;top:19.03px;font-size:13px;color:#1abcb0;font-weight:700;font-family:'Liberation Sans', sans-serif;transform:scaleX(0.9399);">RESEARCH SUBSCRIPTION</a>
<span class="t" style="left:1003.8px;top:17.42px;font-size:15.5px;color:#c0202e;font-weight:400;font-family:'Liberation Sans', sans-serif;transform:scaleX(0.9306);-webkit-text-stroke:0.3px #c0202e;">0 items $0.00</span>
<span class="t" style="left:150px;top:11.13px;font-size:10.5px;color:#1b2d5b;font-weight:700;font-family:'Liberation Sans', sans-serif;transform:scaleX(0.9599);-webkit-text-stroke:0.3px #1b2d5b;">Market</span>
<span class="t" style="left:150px;top:21.98px;font-size:10.5px;color:#1b2d5b;font-weight:700;font-family:'Liberation Sans', sans-serif;transform:scaleX(0.8312);-webkit-text-stroke:0.3px #1b2d5b;">Research</span>
<span class="t" style="left:150px;top:32.33px;font-size:10.5px;color:#1b2d5b;font-weight:700;font-family:'Liberation Sans', sans-serif;transform:scaleX(0.8315);-webkit-text-stroke:0.3px #1b2d5b;">Reports</span>
<span class="t" style="left:184.3px;top:9.53px;font-size:5.5px;color:#8a8f98;font-weight:400;font-family:'Liberation Sans', sans-serif;transform:scaleX(0.9846);">&reg;</span>
<span class="t" style="left:65.8px;top:109.78px;font-size:15px;color:#8a8a8a;font-weight:400;font-family:'Liberation Sans', sans-serif;transform:scaleX(0.9422);">Search Keyword</span>
<b class="t" style="left:927.9px;top:111.19px;font-size:15px;color:#ffffff;font-weight:700;font-family:'Liberation Sans', sans-serif;transform:scaleX(0.8945);letter-spacing:0.9px;">SEARCH</b>
<span class="t" style="left:34.9px;top:190.28px;font-size:15px;color:#787c80;font-weight:400;font-family:'Liberation Sans', sans-serif;transform:scaleX(0.9438);">You are here:</span>
<a class="t" style="left:129.3px;top:190.28px;font-size:15px;color:#ffa000;font-weight:400;font-family:'Liberation Sans', sans-serif;transform:scaleX(0.9496);">Home</a>
<span class="t" style="left:176px;top:191.21px;font-size:14px;color:#787c80;font-weight:400;font-family:'Liberation Sans', sans-serif;transform:scaleX(0.7939);">&gt;</span>
<a class="t" style="left:190.7px;top:190.28px;font-size:15px;color:#ffa000;font-weight:400;font-family:'Liberation Sans', sans-serif;transform:scaleX(0.9419);">Catalog</a>
<span class="t" style="left:247.8px;top:191.21px;font-size:14px;color:#787c80;font-weight:400;font-family:'Liberation Sans', sans-serif;transform:scaleX(0.7939);">&gt;</span>
<a class="t" style="left:262.3px;top:190.28px;font-size:15px;color:#ffa000;font-weight:400;font-family:'Liberation Sans', sans-serif;transform:scaleX(0.9876);">Industry &amp; Manufacturing</a>
<span class="t" style="left:435.3px;top:191.21px;font-size:14px;color:#787c80;font-weight:400;font-family:'Liberation Sans', sans-serif;transform:scaleX(0.7939);">&gt;</span>
<a class="t" style="left:450px;top:190.28px;font-size:15px;color:#ffa000;font-weight:400;font-family:'Liberation Sans', sans-serif;transform:scaleX(0.9682);">Machinery</a>
<span class="t" style="left:525px;top:191.21px;font-size:14px;color:#787c80;font-weight:400;font-family:'Liberation Sans', sans-serif;transform:scaleX(0.7939);">&gt;</span>
<a class="t" style="left:539.3px;top:190.28px;font-size:15px;color:#ffa000;font-weight:400;font-family:'Liberation Sans', sans-serif;transform:scaleX(0.9462);">Turbines</a>
<h1 class="t" style="left:35.4px;top:250.55px;font-size:33.5px;color:#12bfae;font-weight:400;font-family:'Liberation Sans', sans-serif;transform:scaleX(1.0671);">Global Simulate Wind Turbines Market Research Report 2018</h1>
<span class="t" style="left:74.4px;top:453.02px;font-size:18px;color:#444444;font-weight:400;font-family:'Liberation Sans', sans-serif;transform:scaleX(1.0375);">Global Simulate Wind Turbines</span>
<span class="t" style="left:74.4px;top:474.42px;font-size:18px;color:#444444;font-weight:400;font-family:'Liberation Sans', sans-serif;transform:scaleX(1.0090);">Market Research Report 2018</span>
<span class="t" style="left:107.6px;top:756.24px;font-size:14.5px;color:#ffffff;font-weight:400;font-family:'DejaVu Sans', 'Liberation Sans', sans-serif;transform:scaleX(0.9814);">www.marketresearchreports.com</span>
<a class="t" style="left:65.5px;top:803.78px;font-size:15px;color:#ffa000;font-weight:400;font-family:'Liberation Sans', sans-serif;transform:scaleX(0.9565);">Printer version</a>
<a class="t" style="left:189.9px;top:803.78px;font-size:15px;color:#ffa000;font-weight:400;font-family:'Liberation Sans', sans-serif;transform:scaleX(0.9425);">Send by email</a>
<strong class="t" style="left:440px;top:335.38px;font-size:15px;color:#037dc8;font-weight:700;font-family:'Liberation Sans', sans-serif;transform:scaleX(0.9362);">Publication ID:</strong>
<strong class="t" style="left:440px;top:360.38px;font-size:15px;color:#037dc8;font-weight:700;font-family:'Liberation Sans', sans-serif;transform:scaleX(0.9419);">Publication Date:</strong>
<strong class="t" style="left:440px;top:385.38px;font-size:15px;color:#037dc8;font-weight:700;font-family:'Liberation Sans', sans-serif;transform:scaleX(0.8739);">Pages:</strong>
<strong class="t" style="left:440px;top:410.38px;font-size:15px;color:#037dc8;font-weight:700;font-family:'Liberation Sans', sans-serif;transform:scaleX(0.9092);">Publisher:</strong>
<strong class="t" style="left:440px;top:435.38px;font-size:15px;color:#037dc8;font-weight:700;font-family:'Liberation Sans', sans-serif;transform:scaleX(0.9067);">Countries:</strong>
<span class="t" style="left:569.6px;top:335.38px;font-size:15px;color:#787c80;font-weight:400;font-family:'Liberation Sans', sans-serif;transform:scaleX(0.8499);">DIM03181124</span>
<span class="t" style="left:569.6px;top:360.38px;font-size:15px;color:#787c80;font-weight:400;font-family:'Liberation Sans', sans-serif;transform:scaleX(0.8989);">March 29, 2018</span>
<span class="t" style="left:569.6px;top:385.38px;font-size:15px;color:#787c80;font-weight:400;font-family:'Liberation Sans', sans-serif;transform:scaleX(0.7650);">163</span>
<span class="t" style="left:569.6px;top:410.38px;font-size:15px;color:#787c80;font-weight:400;font-family:'Liberation Sans', sans-serif;transform:scaleX(0.9145);">9Dimen Research</span>
<a class="t" style="left:569.6px;top:435.38px;font-size:15px;color:#ffa000;font-weight:400;font-family:'Liberation Sans', sans-serif;transform:scaleX(0.9364);">Global</a>
<span class="t" style="left:717.2px;top:458.49px;font-size:17.6px;color:#be1e2d;font-weight:700;font-family:'Liberation Sans', sans-serif;transform:scaleX(1.0450);">$2,850.00</span>
<label class="t" style="left:440px;top:485.19px;font-size:15px;color:#787c80;font-weight:400;font-family:'Liberation Sans', sans-serif;transform:scaleX(0.9431);">Publication License Type</label>
<span class="t" style="left:601.5px;top:485.38px;font-size:15px;color:#e8212b;font-weight:700;font-family:'Liberation Sans', sans-serif;transform:scaleX(0.9412);">*</span>
<label class="t" style="left:494.4px;top:537.43px;font-size:15px;color:#333333;font-weight:400;font-family:'Liberation Sans', sans-serif;transform:scaleX(0.8535);">SINGLE USER LICENSE (PDF), $2,850.00</label>
<label class="t" style="left:494.4px;top:604.28px;font-size:15px;color:#333333;font-weight:400;font-family:'Liberation Sans', sans-serif;transform:scaleX(0.8767);">GLOBAL LICENSE (PDF), $5,800.00</label>
<p class="t" style="left:440px;top:655.18px;font-size:15px;color:#787c80;font-weight:400;font-family:'Liberation Sans', sans-serif;transform:scaleX(0.9545);">Please choose the suitable license type from above.</p>
<p class="t" style="left:440px;top:680.18px;font-size:15px;color:#787c80;font-weight:400;font-family:'Liberation Sans', sans-serif;transform:scaleX(0.9580);">More details are at given under tab "Report License</p>
<p class="t" style="left:440px;top:705.18px;font-size:15px;color:#787c80;font-weight:400;font-family:'Liberation Sans', sans-serif;transform:scaleX(0.9506);">Types" below.</p>
<b class="t" style="left:556.9px;top:759.51px;font-size:16.6px;color:#ffffff;font-weight:700;font-family:'Liberation Sans', sans-serif;transform:scaleX(0.9714);letter-spacing:1.4px;-webkit-text-stroke:0.4px #fff;">ADD TO CART</b>
<h2 class="t" style="left:899.3px;top:348.00px;font-size:24px;color:#0f3552;font-weight:400;font-family:'Liberation Sans', sans-serif;transform:scaleX(1.0042);">Why to buy from us?</h2>
<h3 class="t" style="left:863.6px;top:420.99px;font-size:16.3px;color:#ffffff;font-weight:400;font-family:'Liberation Sans', sans-serif;transform:scaleX(1.0469);-webkit-text-stroke:0.35px #fff;">Globally Trusted Brand</h3>
<p class="t" style="left:844.5px;top:472.49px;font-size:15px;color:#787c80;font-weight:400;font-family:'Liberation Sans', sans-serif;transform:scaleX(0.9758);">We help executives from</p>
<a class="t" style="left:1008.3px;top:472.49px;font-size:15px;color:#ffa000;font-weight:400;font-family:'Liberation Sans', sans-serif;transform:scaleX(0.9556);">Fortune 500</a>
<p class="t" style="left:1089.5px;top:472.49px;font-size:15px;color:#787c80;font-weight:400;font-family:'Liberation Sans', sans-serif;transform:scaleX(0.9945);">firms to</p>
<p class="t" style="left:844.5px;top:497.88px;font-size:15px;color:#787c80;font-weight:400;font-family:'Liberation Sans', sans-serif;transform:scaleX(0.9717);">Start-ups with their market research needs thus we</p>
<p class="t" style="left:844.5px;top:522.48px;font-size:15px;color:#787c80;font-weight:400;font-family:'Liberation Sans', sans-serif;transform:scaleX(0.9653);">can help you too.</p>
<h3 class="t" style="left:860.5px;top:581.99px;font-size:16.3px;color:#ffffff;font-weight:400;font-family:'Liberation Sans', sans-serif;transform:scaleX(1.0622);-webkit-text-stroke:0.35px #fff;">Shop With Confidence</h3>
<h3 class="t" style="left:860.5px;top:645.99px;font-size:16.3px;color:#ffffff;font-weight:400;font-family:'Liberation Sans', sans-serif;transform:scaleX(1.0400);-webkit-text-stroke:0.35px #fff;">Secure Checkout</h3>
<h3 class="t" style="left:859px;top:709.99px;font-size:16.3px;color:#ffffff;font-weight:400;font-family:'Liberation Sans', sans-serif;transform:scaleX(1.0636);-webkit-text-stroke:0.35px #fff;">Frequently Asked Questions</h3>
<span class="t" style="left:1205.4px;top:622.84px;font-size:11.7px;color:#ffffff;font-weight:700;font-family:'DejaVu Sans', 'Liberation Sans', sans-serif;transform:scaleX(1.0000);">We are</span>
</div>
</body></html>
